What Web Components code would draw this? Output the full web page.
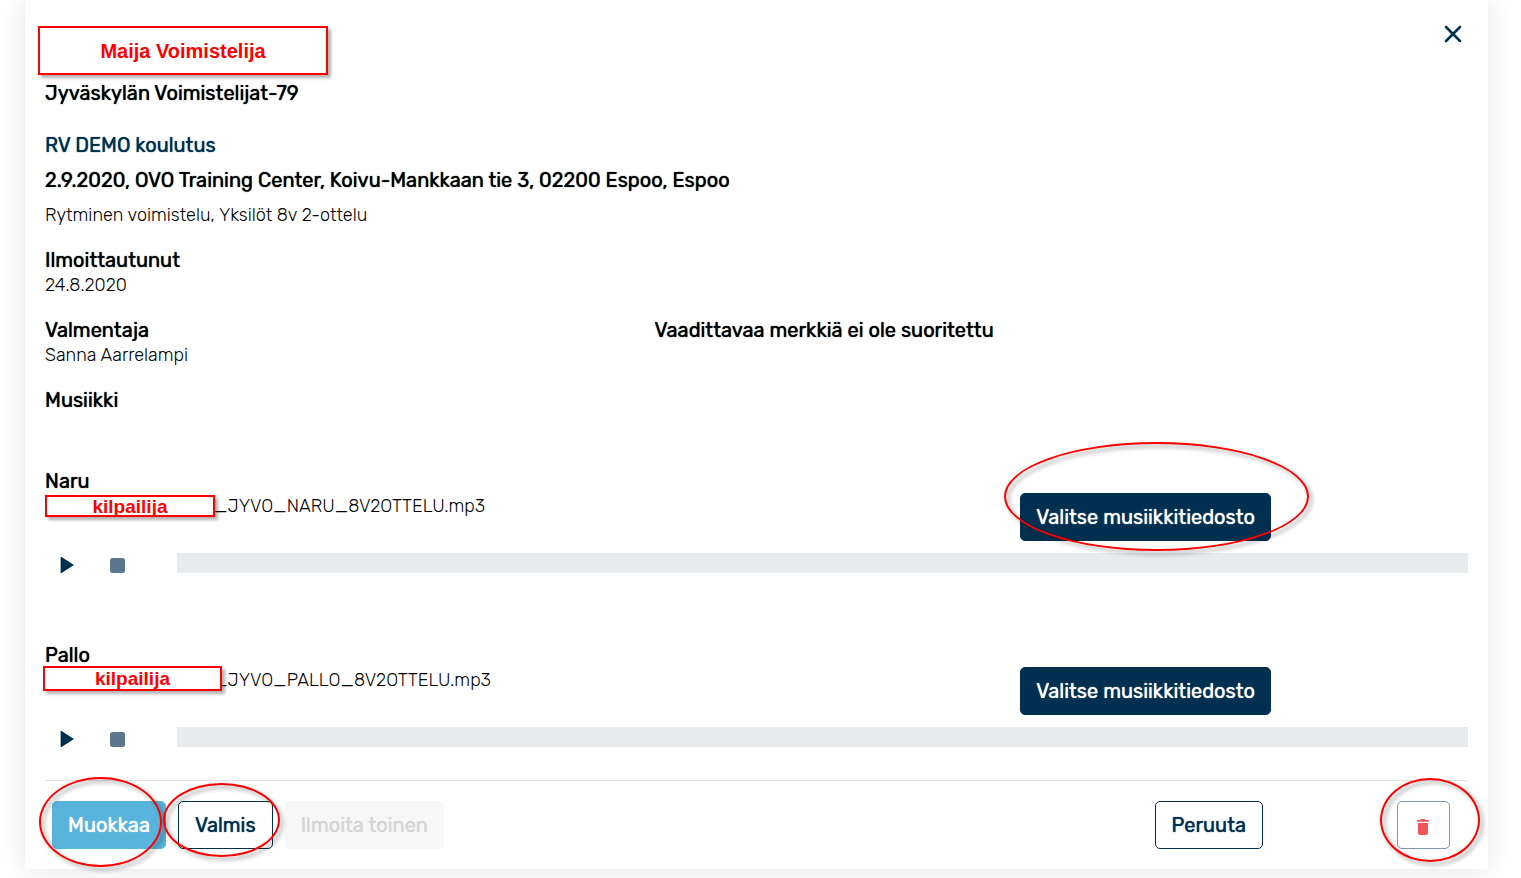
<!DOCTYPE html>
<html lang="fi">
<head>
<meta charset="utf-8">
<title>Ilmoittautuminen</title>
<style>
  body {
    margin: 0;
    background-color: #fff;
    color: #000;
    font: 300 18px/25px Rubik, Roboto, "Liberation Sans", sans-serif;
    --heavy: 0 0 1px currentColor;
  }

  h3 {
    margin: 0;
    font-size: 20px;
    font-weight: 400;
    line-height: 25px;
    text-shadow: var(--heavy);
  }

  h3 a {
    color: #003050;
    text-decoration: none;
    text-shadow: var(--heavy);
  }

  p {
    margin: 0;
  }
</style>
</head>
<body>
<entry-dialog>
  <redacted-name slot="name" class="large">Maija Voimistelija</redacted-name>
  <h3>Jyväskylän Voimistelijat-79</h3>
  <event-summary>
    <h3><a href="#event">RV DEMO koulutus</a></h3>
    <h3>2.9.2020, OVO Training Center, Koivu-Mankkaan tie 3, 02200 Espoo, Espoo</h3>
    <p>Rytminen voimistelu, Yksilöt 8v 2-ottelu</p>
  </event-summary>
  <info-row>
    <info-field label="Ilmoittautunut">24.8.2020</info-field>
  </info-row>
  <info-row>
    <info-field label="Valmentaja">Sanna Aarrelampi</info-field>
    <info-field slot="side" label="Vaadittavaa merkkiä ei ole suoritettu"></info-field>
  </info-row>
  <info-row>
    <info-field label="Musiikki"></info-field>
  </info-row>
  <track-list>
    <music-track name="Naru" file="_JYVO_NARU_8V2OTTELU.mp3">
      <redacted-name slot="cover">kilpailija</redacted-name>
      <ring-mark slot="action" class="file"><action-button kind="primary">Valitse musiikkitiedosto</action-button></ring-mark>
    </music-track>
    <music-track name="Pallo" file="_JYVO_PALLO_8V2OTTELU.mp3">
      <redacted-name slot="cover" class="wide">kilpailija</redacted-name>
      <action-button slot="action" kind="primary">Valitse musiikkitiedosto</action-button>
    </music-track>
  </track-list>
  <dialog-actions slot="actions">
    <ring-mark class="edit"><action-button kind="info">Muokkaa</action-button></ring-mark>
    <ring-mark class="done"><action-button>Valmis</action-button></ring-mark>
    <action-button kind="muted" disabled>Ilmoita toinen</action-button>
    <action-button slot="end">Peruuta</action-button>
    <ring-mark slot="end" class="delete"><action-button kind="icon" label="Poista">
      <svg width="12" height="16" viewBox="0 0 12 16" aria-hidden="true"><path fill="#ef5858" d="M0 2.8V1.4q0-.4.5-.4H3.3Q3.8 0 4.6 0H7.4q.8 0 1.3 1h2.8q.5 0 .5.4V2.8zM1 4H11V14.2Q11 16 9.2 16H2.8Q1 16 1 14.2z"/></svg>
    </action-button></ring-mark>
  </dialog-actions>
</entry-dialog>

<script>
/**
 * Attach an open shadow root filled from a template.
 *
 * @param {HTMLElement} element - Host element.
 * @param {string} html - Markup and styles of the shadow root.
 */
function attachTemplate(element, html) {
  element.attachShadow({ mode: 'open' });
  const template = document.createElement('template');
  template.innerHTML = html;
  element.shadowRoot.appendChild(template.content.cloneNode(true));
}

/**
 * Entry Dialog.
 *
 * White sheet with the competitor's name, a close button, content and actions.
 */
class EntryDialog extends HTMLElement {
  constructor() {
    super();
    attachTemplate(this, `
      <style>
        :host {
          display: block;
          margin: 0 33px 40px 25px;
          padding: 20px;
          background-color: #fff;
          box-shadow: 0 0 30px rgba(0, 0, 0, 0.1);
        }

        header {
          display: flex;
          justify-content: space-between;
          align-items: flex-start;
          margin-bottom: 6px;
        }

        .close {
          display: flex;
          align-items: center;
          justify-content: center;
          width: 30px;
          height: 28px;
          padding: 0;
          border: none;
          background: none;
        }

        footer {
          margin-top: 29px;
          padding-top: 20px;
          border-top: 1px solid #e2e4e6;
        }
      </style>
      <header>
        <slot name="name"></slot>
        <button class="close" aria-label="Sulje">
          <svg width="18" height="18" viewBox="0 0 18 18" fill="none" stroke="#003050" stroke-width="2.6" stroke-linecap="round"><path d="M2 2L16 16M16 2L2 16"/></svg>
        </button>
      </header>
      <slot></slot>
      <footer><slot name="actions"></slot></footer>
    `);
    this.closeButton = this.shadowRoot.querySelector('.close');
  }

  connectedCallback() {
    this.closeButton.addEventListener('click', this.handleClose.bind(this));
  }

  /**
   * Remove the dialog from the page.
   */
  handleClose() {
    this.remove();
  }
}

/**
 * Redacted Name.
 *
 * Red box that covers a real name with a placeholder.
 */
class RedactedName extends HTMLElement {
  constructor() {
    super();
    attachTemplate(this, `
      <style>
        :host {
          display: flex;
          align-items: center;
          justify-content: center;
          box-sizing: border-box;
          width: 170px;
          height: 22px;
          border: 2px solid #f00;
          background-color: #fff;
          box-shadow: 3px 3px 3px rgba(0, 0, 0, 0.3);
          color: #f00;
          font: bold 19px/19px "Liberation Sans", Arial, sans-serif;
        }

        :host(.wide) {
          width: 179px;
          height: 25px;
          margin: -3px 0 0 -2px;
        }

        :host(.large) {
          width: 290px;
          height: 49px;
          margin: 6px 0 0 -7px;
          font-size: 20px;
          line-height: 24px;
        }
      </style>
      <slot></slot>
    `);
  }
}

/**
 * Ring Mark.
 *
 * Hand-drawn style ellipse around the control passed in.
 */
class RingMark extends HTMLElement {
  constructor() {
    super();
    attachTemplate(this, `
      <style>
        :host {
          display: inline-block;
          position: relative;
          --ring: 0;
        }

        :host(.file) { --ring: -51px -38px -10px -16px; }
        :host(.edit) { --ring: -24px 4px -18px -13px; }
        :host(.done) { --ring: -18px -7px -8px -15px; }
        :host(.delete) { --ring: -23px -30px -13px -17px; }

        .ring {
          position: absolute;
          inset: var(--ring);
          z-index: 1;
          border: 2px solid #f00;
          border-radius: 50%;
          filter: drop-shadow(3px 3px 2px rgba(0, 0, 0, 0.4));
          pointer-events: none;
        }
      </style>
      <slot></slot>
      <div class="ring"></div>
    `);
  }
}

/**
 * Action Button.
 */
class ActionButton extends HTMLElement {
  constructor() {
    super();
    attachTemplate(this, `
      <style>
        :host {
          display: inline-block;
        }

        button {
          display: flex;
          align-items: center;
          justify-content: center;
          height: 48px;
          padding: 0 16px;
          border: 1px solid #003050;
          border-radius: 5px;
          background-color: #fff;
          color: #003050;
          font: inherit;
          font-size: 20px;
          font-weight: 400;
          text-shadow: var(--heavy);
          white-space: nowrap;
        }

        :host([kind="primary"]) button {
          padding: 0 15px;
          background-color: #003050;
          color: #fff;
        }

        :host([kind="info"]) button {
          padding: 0 15px;
          border-color: #58b4dc;
          background-color: #58b4dc;
          color: #fff;
        }

        :host([kind="muted"]) button {
          padding: 0 15px;
          border-color: #f7f7f7;
          background-color: #f7f7f7;
          color: #d6d6d6;
        }

        :host([kind="icon"]) button {
          width: 53px;
          padding: 4px 2px 0 0;
          border-color: #8098a8;
        }
      </style>
      <button><slot></slot></button>
    `);
    this.button = this.shadowRoot.querySelector('button');
  }

  connectedCallback() {
    this.button.disabled = this.hasAttribute('disabled');
    if (this.hasAttribute('label')) {
      this.button.setAttribute('aria-label', this.getAttribute('label'));
    }
  }
}

/**
 * Event Summary.
 */
class EventSummary extends HTMLElement {
  constructor() {
    super();
    attachTemplate(this, `
      <style>
        :host {
          display: flex;
          flex-direction: column;
          gap: 10px;
          margin-top: 27px;
        }
      </style>
      <slot></slot>
    `);
  }
}

/**
 * Info Row, a main column and a side column.
 */
class InfoRow extends HTMLElement {
  constructor() {
    super();
    attachTemplate(this, `
      <style>
        :host {
          display: grid;
          grid-template-columns: repeat(12, minmax(0, 1fr));
          column-gap: 40px;
          margin-top: 20px;
        }

        .main { grid-column: span 5; }
        .side { grid-column: span 7; }
      </style>
      <div class="main"><slot></slot></div>
      <div class="side"><slot name="side"></slot></div>
    `);
  }
}

/**
 * Info Field, a label with its value below.
 */
class InfoField extends HTMLElement {
  constructor() {
    super();
    attachTemplate(this, `
      <style>
        :host {
          display: block;
        }

        h4 {
          margin: 0;
          font-size: 20px;
          font-weight: 400;
          text-shadow: var(--heavy);
        }
      </style>
      <h4></h4>
      <slot></slot>
    `);
  }

  connectedCallback() {
    this.shadowRoot.querySelector('h4').textContent = this.getAttribute('label');
  }
}

/**
 * Track List.
 */
class TrackList extends HTMLElement {
  constructor() {
    super();
    attachTemplate(this, `
      <style>
        :host {
          display: flex;
          flex-direction: column;
          gap: 66px;
          margin-top: 56px;
        }
      </style>
      <slot></slot>
    `);
  }
}

/**
 * Music Track.
 *
 * File name, file chooser and a small player.
 */
class MusicTrack extends HTMLElement {
  constructor() {
    super();
    attachTemplate(this, `
      <style>
        :host {
          display: block;
        }

        .head {
          display: grid;
          grid-template-columns: repeat(12, minmax(0, 1fr));
          column-gap: 40px;
        }

        .info { grid-column: span 8; }

        .action {
          display: flex;
          grid-column: span 4;
          align-items: flex-start;
          padding-top: 24px;
        }

        h4 {
          margin: 0;
          font-size: 20px;
          font-weight: 400;
          text-shadow: var(--heavy);
        }

        .file {
          position: relative;
          padding-left: 169px;
        }

        .cover {
          position: absolute;
          left: 0;
          top: 1px;
        }

        .player {
          display: flex;
          align-items: flex-start;
          gap: 6px;
          margin-top: 12px;
        }

        .player button {
          display: flex;
          align-items: center;
          justify-content: center;
          width: 44px;
          height: 24px;
          padding: 0;
          border: none;
          background: none;
        }

        progress {
          flex: 1;
          height: 20px;
          margin-left: 32px;
          border: none;
          appearance: none;
          background-color: #e8ebee;
        }

        progress::-webkit-progress-bar { background-color: #e8ebee; }
        progress::-webkit-progress-value { background-color: #003050; }
      </style>
      <div class="head">
        <div class="info">
          <h4></h4>
          <div class="file"><span class="cover"><slot name="cover"></slot></span><span class="name"></span></div>
        </div>
        <div class="action"><slot name="action"></slot></div>
      </div>
      <div class="player">
        <button aria-label="Toista"><svg width="14" height="16" viewBox="0 0 14 16"><path fill="#003050" d="M.6 0H1.6L14 8L1.6 16H.6z"/></svg></button>
        <button aria-label="Pysäytä" disabled><svg width="15" height="15" viewBox="0 0 15 15"><rect width="15" height="15" rx="2.5" fill="#5c788e"/></svg></button>
        <progress max="100" value="0" aria-label="Toiston eteneminen"></progress>
      </div>
    `);
  }

  connectedCallback() {
    this.shadowRoot.querySelector('h4').textContent = this.getAttribute('name');
    this.shadowRoot.querySelector('.name').textContent = this.getAttribute('file');
  }
}

/**
 * Dialog Actions, start and end groups of buttons.
 */
class DialogActions extends HTMLElement {
  constructor() {
    super();
    attachTemplate(this, `
      <style>
        :host {
          display: flex;
          justify-content: space-between;
          padding: 0 18px 0 7px;
        }

        div {
          display: flex;
          gap: 12px;
        }

        .end { gap: 134px; }
      </style>
      <div><slot></slot></div>
      <div class="end"><slot name="end"></slot></div>
    `);
  }
}

// Register custom elements
customElements.define('entry-dialog', EntryDialog);
customElements.define('redacted-name', RedactedName);
customElements.define('ring-mark', RingMark);
customElements.define('action-button', ActionButton);
customElements.define('event-summary', EventSummary);
customElements.define('info-row', InfoRow);
customElements.define('info-field', InfoField);
customElements.define('track-list', TrackList);
customElements.define('music-track', MusicTrack);
customElements.define('dialog-actions', DialogActions);
</script>
</body>
</html>
